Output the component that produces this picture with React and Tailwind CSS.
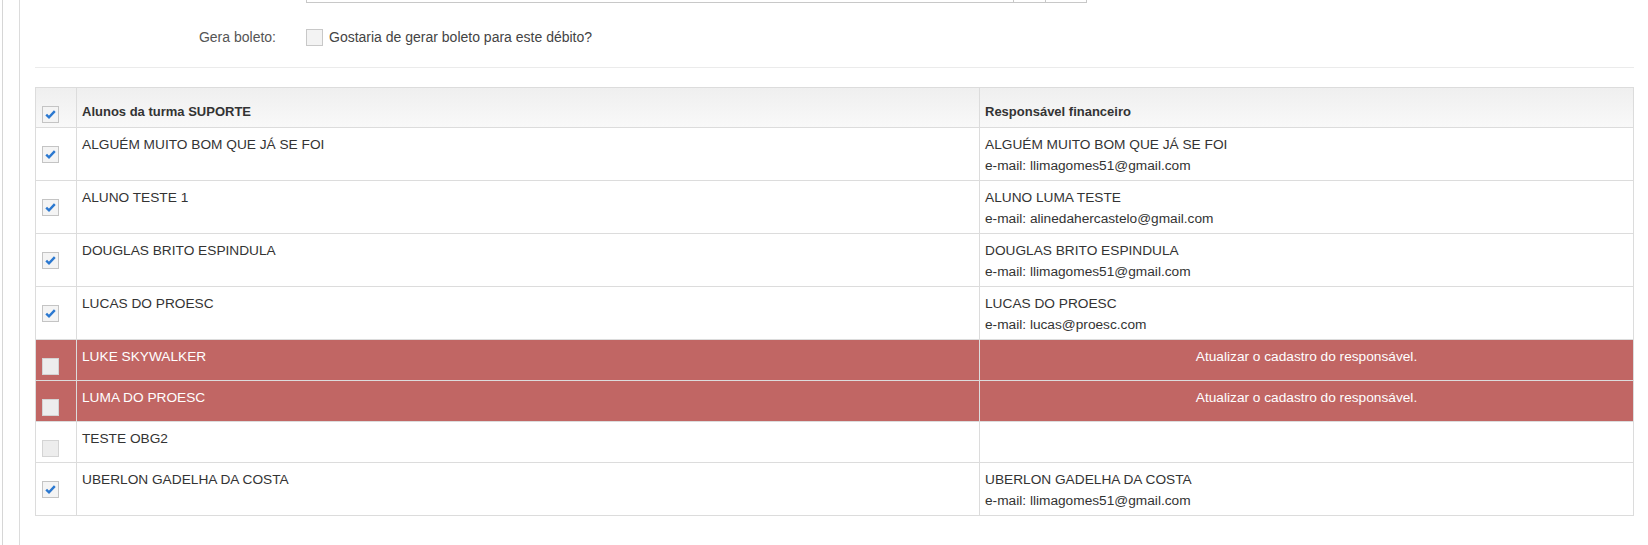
import React from 'react';

const students = [
  { name: 'ALGUÉM MUITO BOM QUE JÁ SE FOI', resp: 'ALGUÉM MUITO BOM QUE JÁ SE FOI', email: 'llimagomes51@gmail.com', checked: true },
  { name: 'ALUNO TESTE 1', resp: 'ALUNO LUMA TESTE', email: 'alinedahercastelo@gmail.com', checked: true },
  { name: 'DOUGLAS BRITO ESPINDULA', resp: 'DOUGLAS BRITO ESPINDULA', email: 'llimagomes51@gmail.com', checked: true },
  { name: 'LUCAS DO PROESC', resp: 'LUCAS DO PROESC', email: 'lucas@proesc.com', checked: true },
  { name: 'LUKE SKYWALKER', error: true },
  { name: 'LUMA DO PROESC', error: true },
  { name: 'TESTE OBG2', disabled: true },
  { name: 'UBERLON GADELHA DA COSTA', resp: 'UBERLON GADELHA DA COSTA', email: 'llimagomes51@gmail.com', checked: true },
];

function Checkbox({ checked, muted }) {
  return (
    <span
      className={
        muted
          ? 'flex w-[17px] h-[17px] items-center justify-center border border-[#d4d4d4] bg-[#ededed]'
          : 'flex w-[17px] h-[17px] items-center justify-center border border-[#c4c4c4] bg-[#f4f4f4]'
      }
    >
      {checked && (
        <svg width="11" height="9" viewBox="0 0 11 9">
          <path d="M1.2 4.6 L4 7.3 L9.8 1.2" fill="none" stroke="#2b78d0" strokeWidth="2.4" />
        </svg>
      )}
    </span>
  );
}

export default function App() {
  return (
    <div className="flex min-h-screen bg-white text-[#333] font-['Liberation_Sans',Arial,sans-serif]">
      <div className="w-[2px]" />
      <div className="w-[17px] border-l border-[#d6d6d6]" />
      <div className="flex-1 border-l border-[#dcdcdc] pl-[15px] pr-[14px]">
        {/* input remnant from the field above */}
        <div className="ml-[271px] w-[781px] h-[3px] flex border-x border-b border-[#c8c8c8]">
          <div className="w-[707px] border-r border-[#c8c8c8]" />
          <div className="w-[32px] border-r border-[#c8c8c8]" />
          <div className="flex-1" />
        </div>

        {/* Gera boleto */}
        <div className="mt-[26px] flex items-center h-[17px]">
          <div className="w-[241px] text-right text-[14px] text-[#555]">Gera boleto:</div>
          <div className="ml-[30px] flex items-center gap-[6px]">
            <span className="inline-block w-[17px] h-[17px] border border-[#c8c8c8] bg-[#f3f3f3]" />
            <span className="text-[14px] text-[#444]">Gostaria de gerar boleto para este débito?</span>
          </div>
        </div>

        <div className="mt-[21px] border-t border-[#ebebeb]" />

        {/* Students table */}
        <table className="mt-[19px] w-full table-fixed border-collapse border border-[#dcdcdc]">
          <colgroup>
            <col className="w-[41px]" />
            <col className="w-[903px]" />
            <col />
          </colgroup>
          <thead>
            <tr className="bg-linear-to-b from-[#efefef] to-[#f9f9f9]">
              <th className="border border-[#dcdcdc] pl-[6px] pt-[18px] pb-[4px] text-left align-top">
                <Checkbox checked />
              </th>
              <th className="border border-[#dcdcdc] px-[5px] pb-[5px] text-left align-bottom text-[13px] leading-[20px] font-bold">
                Alunos da turma SUPORTE
              </th>
              <th className="border border-[#dcdcdc] px-[5px] pb-[5px] text-left align-bottom text-[13px] leading-[20px] font-bold">
                Responsável financeiro
              </th>
            </tr>
          </thead>
          <tbody className="text-[13.7px] leading-[21px]">
            {students.map((s) => (
              <tr key={s.name} className={s.error ? 'bg-[#c16664] text-white' : 'bg-white'}>
                <td className="border border-[#dcdcdc] pl-[6px] pt-[18px] pb-[5px] align-top">
                  <Checkbox checked={s.checked} muted={s.error || s.disabled} />
                </td>
                <td className="border border-[#dcdcdc] px-[5px] pt-[6px] pb-[4px] align-top">{s.name}</td>
                {s.error ? (
                  <td className="border border-[#dcdcdc] px-[5px] pt-[6px] pb-[4px] align-top text-center">
                    Atualizar o cadastro do responsável.
                  </td>
                ) : (
                  <td className="border border-[#dcdcdc] px-[5px] pt-[6px] pb-[4px] align-top">
                    {s.resp && (
                      <>
                        <div>{s.resp}</div>
                        <div>e-mail: {s.email}</div>
                      </>
                    )}
                  </td>
                )}
              </tr>
            ))}
          </tbody>
        </table>
      </div>
    </div>
  );
}
